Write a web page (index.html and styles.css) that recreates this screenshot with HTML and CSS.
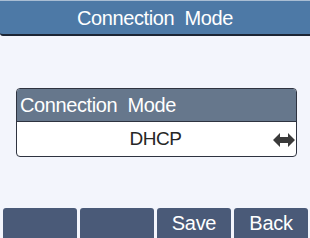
FILE: index.html
```html
<!DOCTYPE html>
<html>
<head>
<meta charset="utf-8">
<link rel="stylesheet" href="styles.css">
</head>
<body>
<div class="screen">
  <div class="titlebar">Connection&nbsp; Mode</div>
  <div class="content">
    <div class="field">
      <div class="field-label">Connection&nbsp; Mode</div>
      <div class="field-value">
        <span class="value-text">DHCP</span>
        <svg class="arrows" width="22" height="14" viewBox="0 0 22 14">
          <polygon points="0,7 7,0 7,4 15,4 15,0 22,7 15,14 15,10 7,10 7,14" fill="#3a3a3a"/>
        </svg>
      </div>
    </div>
  </div>
  <div class="softkeys">
    <div class="softkey"></div>
    <div class="softkey"></div>
    <div class="softkey">Save</div>
    <div class="softkey">Back</div>
  </div>
</div>
</body>
</html>
```
FILE: styles.css
```css
html, body {
  margin: 0;
  padding: 0;
}
body {
  width: 310px;
  height: 238px;
  overflow: hidden;
  background: #f3f5fc;
  font-family: "Liberation Sans", Arial, sans-serif;
}
.screen {
  display: flex;
  flex-direction: column;
  height: 238px;
}
.titlebar {
  height: 33px;
  border-top: 1px solid #a9bdd3;
  border-bottom: 2px solid #1c2534;
  background: #4d79a6;
  color: #ffffff;
  font-size: 20px;
  letter-spacing: -0.4px;
  line-height: 34px;
  text-align: center;
  border-bottom-left-radius: 3px;
}
.content {
  flex: 1;
  padding: 52px 13px 0 16px;
}
.field {
  border: 1px solid #2e3340;
  border-radius: 4px;
  overflow: hidden;
  background: #ffffff;
}
.field-label {
  height: 32px;
  background: #66778c;
  color: #ffffff;
  font-size: 20px;
  letter-spacing: -0.4px;
  line-height: 33px;
  padding-left: 3px;
  border-bottom: 1px solid #2e3340;
}
.field-value {
  height: 34px;
  display: flex;
  align-items: center;
  justify-content: center;
  position: relative;
}
.value-text {
  font-size: 19px;
  letter-spacing: -0.5px;
  color: #262626;
  margin-left: -2px;
}
.arrows {
  position: absolute;
  right: 1px;
  top: 11px;
}
.softkeys {
  display: flex;
  gap: 3px;
  padding: 0 2px 0 3px;
  height: 30px;
}
.softkey {
  flex: 1;
  background: #4a5a78;
  border-radius: 3px 3px 0 0;
  color: #ffffff;
  font-size: 20px;
  letter-spacing: -0.3px;
  line-height: 30px;
  text-align: center;
}
```
